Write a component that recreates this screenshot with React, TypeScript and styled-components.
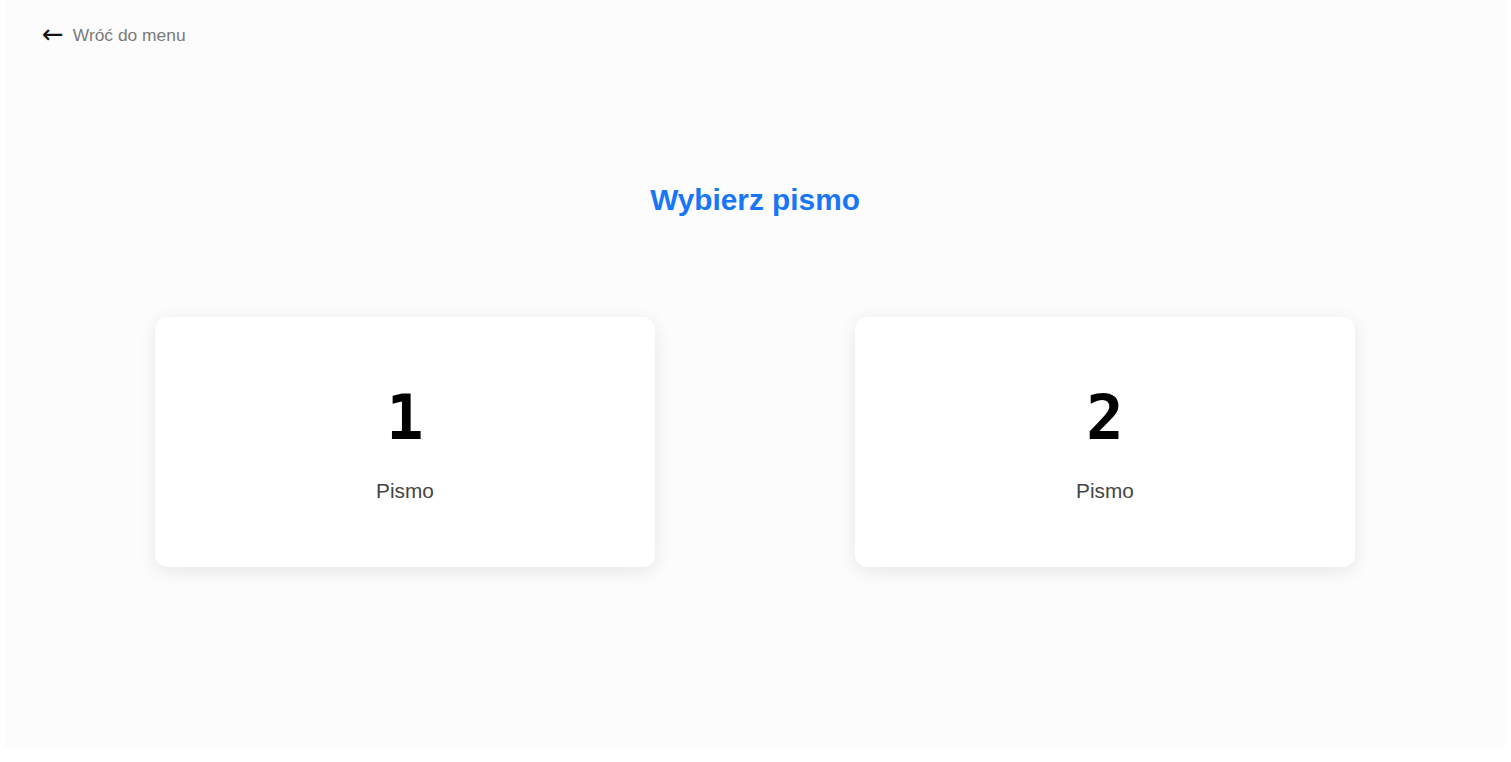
import React from "react";
import styled, { createGlobalStyle } from "styled-components";

const GlobalStyle = createGlobalStyle`
  html, body {
    margin: 0;
    padding: 0;
    background: #ffffff;
  }
  body {
    font-family: "Liberation Sans", Arial, sans-serif;
  }
`;

const Page = styled.div`
  margin: 0 6px 0 5px;
  height: 749px;
  background: #fcfcfc;
  display: flex;
  flex-direction: column;
`;

const TopBar = styled.div`
  display: flex;
  align-items: center;
  padding: 24px 0 0 37px;
  height: 22px;
`;

const BackLink = styled.a`
  display: inline-flex;
  align-items: center;
  gap: 9px;
  color: #7a7a7a;
  font-size: 17.4px;
  text-decoration: none;
  cursor: pointer;
`;

const Arrow = styled.span`
  color: #111;
  font-family: "DejaVu Sans", sans-serif;
  font-size: 26px;
  line-height: 1;
  margin-top: -3px;
`;

const Title = styled.h1`
  margin: 136px 0 0;
  text-align: center;
  color: #1877f7;
  font-size: 29.8px;
  font-weight: 700;
  line-height: 36px;
`;

const Cards = styled.div`
  display: flex;
  justify-content: center;
  gap: 200px;
  margin-top: 99px;
`;

const Card = styled.button`
  width: 500px;
  height: 250px;
  background: #ffffff;
  border: none;
  border-radius: 12px;
  box-shadow: 0 4px 18px rgba(0, 0, 0, 0.09);
  display: flex;
  flex-direction: column;
  align-items: center;
  padding: 0;
  padding-top: 69px;
  box-sizing: border-box;
  cursor: pointer;
`;

const Digit = styled.div`
  font-family: "DejaVu Sans Mono", monospace;
  font-weight: 700;
  font-size: 62px;
  line-height: 64px;
  color: #000;
`;

const Label = styled.div`
  margin-top: 29px;
  font-family: "Liberation Sans", Arial, sans-serif;
  font-size: 20.8px;
  line-height: 24px;
  color: #444;
`;

const items = ["1", "2"];

export default function App() {
  return (
    <>
      <GlobalStyle />
      <Page>
        <TopBar>
          <BackLink>
            <Arrow>←</Arrow>
            Wróć do menu
          </BackLink>
        </TopBar>
        <Title>Wybierz pismo</Title>
        <Cards>
          {items.map((n) => (
            <Card key={n}>
              <Digit>{n}</Digit>
              <Label>Pismo</Label>
            </Card>
          ))}
        </Cards>
      </Page>
    </>
  );
}
